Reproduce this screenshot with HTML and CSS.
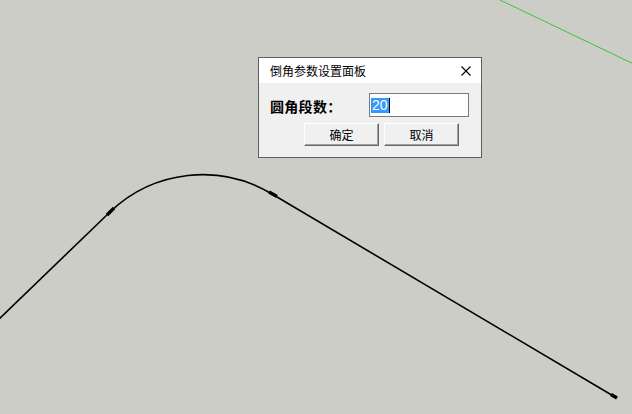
FILE: index.html
```html
<!DOCTYPE html>
<html lang="zh">
<head>
<meta charset="utf-8">
<title>倒角参数设置面板</title>
<link rel="stylesheet" href="styles.css">
</head>
<body>
<div class="viewport">
  <svg class="scene" width="632" height="414" viewBox="0 0 632 414">
    <line x1="500" y1="0" x2="640" y2="67" stroke="#3cc43c" stroke-width="1"/>
    <path d="M-2 320 L110 212 A134 134 0 0 1 272 194 L615 397" fill="none" stroke="#000" stroke-width="1.6"/>
    <line x1="107" y1="215" x2="114" y2="208" stroke="#000" stroke-width="3.4"/>
    <line x1="269" y1="192" x2="277" y2="196.5" stroke="#000" stroke-width="3.4"/>
    <line x1="611" y1="394.5" x2="617" y2="398" stroke="#000" stroke-width="3.6"/>
  </svg>

  <div class="dialog">
    <div class="titlebar">
      <span class="title">倒角参数设置面板</span>
      <svg class="close" width="10" height="10" viewBox="0 0 10 10">
        <path d="M0.5 0.5 L9.5 9.5 M9.5 0.5 L0.5 9.5" stroke="#000" stroke-width="1.1" fill="none"/>
      </svg>
    </div>
    <div class="content">
      <div class="field">
        <span class="label">圆角段数：</span>
        <div class="input"><span class="sel">20</span><span class="caret"></span></div>
      </div>
      <div class="buttons">
        <div class="btn">确定</div>
        <div class="btn">取消</div>
      </div>
    </div>
  </div>
</div>
</body>
</html>
```

FILE: styles.css
```css
html, body {
  margin: 0;
  padding: 0;
}
body {
  width: 632px;
  height: 414px;
  overflow: hidden;
  background: #cdcdc8;
  font-family: "Noto Sans CJK SC", "Noto Sans", sans-serif;
}
.viewport {
  position: relative;
  width: 632px;
  height: 414px;
}
.scene {
  position: absolute;
  left: 0;
  top: 0;
}
.dialog {
  position: absolute;
  left: 258px;
  top: 57px;
  width: 224px;
  height: 101px;
  box-sizing: border-box;
  border: 1px solid #5f5f5f;
  background: #f0f0f0;
  display: flex;
  flex-direction: column;
}
.titlebar {
  height: 25px;
  background: #ffffff;
  display: flex;
  align-items: center;
  justify-content: space-between;
  padding: 0 10px 0 11px;
}
.title {
  font-size: 12px;
  line-height: 12px;
  color: #000;
}
.close {
  display: block;
}
.content {
  display: flex;
  flex-direction: column;
  padding: 10px 0 0 11px;
}
.field {
  display: flex;
  align-items: center;
  height: 24px;
}
.label {
  width: 99px;
  font-size: 14px;
  font-weight: 700;
  letter-spacing: 0.3px;
  line-height: 14px;
  color: #000;
  padding-top: 1px;
}
.input {
  width: 100px;
  height: 24px;
  box-sizing: border-box;
  border: 1px solid #7a7a7a;
  background: #fff;
  display: flex;
  align-items: center;
  padding-left: 1px;
}
.sel {
  background: #3399ff;
  color: #fff;
  font-family: "Liberation Sans", Arial, sans-serif;
  font-size: 14px;
  line-height: 15px;
  height: 15px;
  padding: 0 1px;
}
.caret {
  width: 1px;
  height: 15px;
  background: #000;
}
.buttons {
  display: flex;
  gap: 5px;
  margin-top: 6px;
  padding-left: 34px;
}
.btn {
  width: 75px;
  height: 23px;
  box-sizing: border-box;
  background: #f0f0f0;
  border: 1px solid;
  border-color: #ffffff #696969 #696969 #ffffff;
  box-shadow: inset -1px -1px 0 #a0a0a0, 0 0 0 0 transparent;
  display: flex;
  align-items: center;
  justify-content: center;
  font-size: 12px;
  color: #000;
}
```
